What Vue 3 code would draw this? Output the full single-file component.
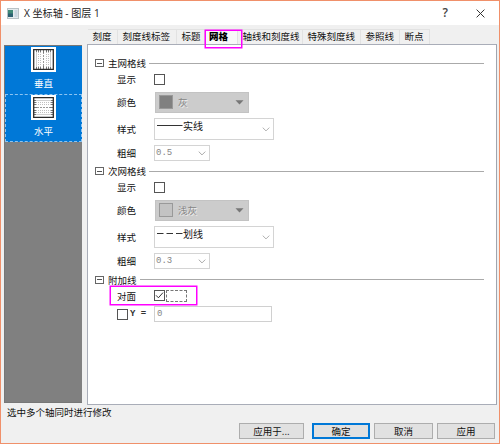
<script setup>
const tabs = [
  { name: '刻度', width: 30 },
  { name: '刻度线标签', width: 59 },
  { name: '标题', width: 28 },
  { name: '网格', width: 33, active: true },
  { name: '轴线和刻度线', width: 65 },
  { name: '特殊刻度线', width: 58 },
  { name: '参照线', width: 39 },
  { name: '断点', width: 30 },
]
const grids = [
  { title: '主网格线', color: '灰', swatch: '#808080', style: '实线', dash: 'none', width: '0.5' },
  { title: '次网格线', color: '浅灰', swatch: '#c3c3c3', style: '划线', dash: '6.5 3', width: '0.3' },
]
const axes = [
  { name: '垂直', rotate: 0 },
  { name: '水平', rotate: 90, focus: true },
]
const buttons = [
  { name: '应用于...', width: 65, gap: 8 },
  { name: '确定', width: 58, gap: 4, primary: true },
  { name: '取消', width: 59, gap: 4 },
  { name: '应用', width: 58, gap: 0 },
]
</script>

<template>
  <div class="window">
    <header class="titlebar">
      <svg class="app-icon" width="12" height="11" viewBox="0 0 12 11">
        <rect x="0.5" y="0.5" width="11" height="10" fill="#e4ebee" stroke="#b9c2c6" />
        <rect x="1" y="2" width="5" height="7" fill="#3f8a78" />
        <rect x="1" y="5.5" width="5" height="3.5" fill="#2c6172" />
        <rect x="7.5" y="2" width="3" height="7" fill="#c9d6e0" />
      </svg>
      <span class="title">X 坐标轴 - 图层 1</span>
      <span class="help">?</span>
      <svg class="close" width="9" height="9" viewBox="0 0 9 9">
        <path d="M0.6 0.6L8.4 8.4M8.4 0.6L0.6 8.4" stroke="#333" fill="none" />
      </svg>
    </header>

    <main class="body">
      <aside class="sidebar">
        <div v-for="a in axes" :key="a.name" class="axis" :class="{ focus: a.focus }">
          <svg width="25" height="25" viewBox="0 0 25 25">
            <rect width="25" height="25" fill="#fff" />
            <g :transform="`rotate(${a.rotate} 12.5 12.5)`" fill="none">
              <path d="M5.5 5V20M19.5 5V20" stroke="#d0d0d0" />
              <path d="M7.5 5V20M9.5 5V20M15.5 5V20M17.5 5V20" stroke="#c0c0c0" stroke-dasharray="1 1" />
              <path d="M12.5 5V20" stroke="#999" stroke-dasharray="2 1" />
              <path d="M5.5 3v2M7.5 3v2M9.5 3v2M12.5 3v3M15.5 3v2M17.5 3v2M19.5 3v2M5.5 22v-2M7.5 22v-2M9.5 22v-2M12.5 22v-3M15.5 22v-2M17.5 22v-2M19.5 22v-2" stroke="#777" />
              <path d="M2.7 2.7H22.3V22.3H2.7Z" stroke="#2a2a2a" stroke-width="1.3" />
            </g>
          </svg>
          <span class="axis-name">{{ a.name }}</span>
        </div>
      </aside>

      <section class="content">
        <nav class="tabs">
          <div v-for="t in tabs" :key="t.name" class="tab" :class="{ active: t.active }" :style="{ width: t.width + 'px' }">
            {{ t.name }}
            <i v-if="t.active" class="mark"></i>
          </div>
        </nav>
        <div class="panel">
          <div v-for="g in grids" :key="g.title" class="group">
            <div class="head"><i class="fold"></i><span>{{ g.title }}</span><i class="rule"></i></div>
            <div class="row show"><span class="label">显示</span><i class="check"></i></div>
            <div class="row color">
              <span class="label">颜色</span>
              <div class="picker">
                <i class="swatch" :style="{ background: g.swatch }"></i>
                <span class="picker-name">{{ g.color }}</span>
                <svg width="9" height="5" viewBox="0 0 9 5"><path d="M0.5 0.3H8.5L4.5 4.6Z" fill="#777" /></svg>
              </div>
            </div>
            <div class="row style">
              <span class="label">样式</span>
              <div class="combo wide">
                <svg class="sample" width="26" height="3" viewBox="0 0 26 3">
                  <path d="M0 1.5H25.5" stroke="#333" :stroke-dasharray="g.dash" />
                </svg>
                <span class="style-name">{{ g.style }}</span>
                <svg class="chev" width="8" height="5" viewBox="0 0 8 5"><path d="M0.7 0.6L4 3.9L7.3 0.6" fill="none" stroke="#b0b0b0" /></svg>
              </div>
            </div>
            <div class="row weight">
              <span class="label">粗细</span>
              <div class="combo small">
                <span class="num">{{ g.width }}</span>
                <svg class="chev" width="8" height="5" viewBox="0 0 8 5"><path d="M0.7 0.6L4 3.9L7.3 0.6" fill="none" stroke="#aaa" /></svg>
              </div>
            </div>
          </div>
          <div class="group">
            <div class="head last"><i class="fold"></i><span>附加线</span><i class="rule"></i></div>
            <div class="row opposite">
              <span class="label">对面</span>
              <i class="check">
                <svg width="9" height="9" viewBox="0 0 9 9"><path d="M1 4.3L3.4 6.8L8 1.6" fill="none" stroke="#333" /></svg>
              </i>
              <i class="focus-box"></i>
            </div>
            <div class="row y-row">
              <span class="label y-label"><i class="check"></i>Y =</span>
              <div class="field num">0</div>
            </div>
          </div>
        </div>
      </section>
    </main>

    <p class="hint">选中多个轴同时进行修改</p>
    <footer class="buttons">
      <button v-for="b in buttons" :key="b.name" :class="{ primary: b.primary }" :style="{ width: b.width + 'px', marginRight: b.gap + 'px' }">{{ b.name }}</button>
    </footer>
  </div>
</template>

<style>
body { margin: 0; overflow: hidden; }
</style>

<style scoped>
* { box-sizing: border-box; }
svg { display: block; flex: none; }
i { display: block; flex: none; font-style: normal; }
.window {
  width: 500px; height: 444px; border: 1px solid #f0906a; background: #f0f0f0;
  font: 9.5px/14px "Noto Sans CJK SC", sans-serif; color: #111;
  display: flex; flex-direction: column; white-space: nowrap;
}
.titlebar { height: 24px; background: #fff; display: flex; align-items: center; padding: 0 14px 0 6px; flex: none; }
.title { font: 10.1px/14px "Open Sans", "Noto Sans CJK SC", sans-serif; margin-left: 5px; color: #222; }
.help { margin-left: auto; font: 600 12px/14px "Open Sans", sans-serif; color: #444; margin-right: 28px; }
.body { display: flex; height: 380px; padding: 0 2px 0 3px; flex: none; }
.sidebar { width: 78px; height: 358px; margin: 20px 5px 0 0; background: #808080; border: 1px solid #777; border-right: 0; flex: none; }
.axis { height: 48px; background: #0078d7; color: #fff; display: flex; flex-direction: column; align-items: center; padding-top: 1px; }
.axis.focus { border: 1px dashed #8cc4f2; padding-top: 0; }
.axis-name { margin-top: 4px; }
.content { width: 410px; flex: none; }
.tabs { display: flex; height: 19px; padding: 4px 0 0 1px; }
.tab { height: 15px; border: 1px solid #e2e2e2; border-left: 0; border-bottom: 0; padding-left: 4.5px; line-height: 12px; flex: none; position: relative; }
.tab.active { font-weight: 900; padding-left: 4px; background: #f8f8f8; z-index: 1; color: #000; }
.mark { position: absolute; left: 0; top: 0; width: 37px; height: 18px; border: 1px solid #ff00ff; box-shadow: 0 0 0 0.5px #ff00ff; }
.mark::after { content: ""; position: absolute; right: 0; top: 1px; width: 3px; height: 12px; background: #f0f0f0; }
.panel { height: 361px; border: 1px solid #a9adb8; border-right-color: #a0a4ae; background: #fff; padding: 11px 12px 0 7px; }
.group { height: 108px; }
.head { height: 14px; display: flex; align-items: center; }
.head span { margin: 0 3px 0 4px; }
.head.last { position: relative; top: 0.5px; }
.fold { width: 9px; height: 8px; border: 1px solid #666; display: flex; align-items: center; }
.fold::after { content: ""; width: 5px; height: 1px; margin: auto; background: #555; }
.rule { flex: 1; height: 1px; background: #aaa; }
.row { display: flex; align-items: center; padding-left: 22px; }
.label { width: 37px; flex: none; }
.show { height: 18px; }
.color { height: 28px; }
.style { height: 26px; }
.weight { height: 22px; }
.check { width: 11px; height: 11px; border: 1px solid #555; background: #fff; }
.picker { width: 94px; height: 21px; margin-left: 1px; background: #ccc; border: 1px solid #c3c3c3; display: flex; align-items: center; padding: 0 4px 0 3px; }
.swatch { width: 14px; height: 14px; border: 1px solid #999; }
.picker-name { flex: 1; margin-left: 5px; color: #868686; text-shadow: 1px 1px #eee; }
.combo { border: 1px solid #d4d4d4; background: #fff; display: flex; align-items: center; }
.chev { margin-left: auto; }
.wide { width: 120px; height: 22px; padding-right: 3px; }
.sample { margin: -7px 0 0 2px; }
.style-name { margin-top: -7px; font-size: 10px; }
.small { width: 56px; height: 16px; padding: 0 3px 0 1px; }
.num { font-family: "Liberation Mono", monospace; font-size: 9px; color: #858585; }
.opposite { width: 87px; height: 19px; margin-left: 15px; padding-left: 6px; border: 1px solid #ff00ff; box-shadow: 0 0 0 0.5px #ff00ff; }
.focus-box { width: 21px; height: 12px; margin-left: 1px; border: 1px dashed #777; }
.y-row { height: 18px; }
.y-label { display: flex; align-items: center; gap: 2px; font-family: "Liberation Mono", monospace; font-size: 9px; font-weight: 700; color: #333; }
.field { width: 118px; height: 16px; border: 1px solid #d0d0d0; padding-left: 2px; line-height: 14px; }
.hint { margin: 0; height: 18px; padding-left: 6px; line-height: 14px; flex: none; }
.buttons { display: flex; justify-content: flex-end; padding-right: 4px; }
button { height: 16px; padding: 0; border: 1px solid #adadad; background: #e1e1e1; font: inherit; line-height: 13px; color: #111; }
button.primary { border: 1.5px solid #0078d7; outline: 0.5px solid #0078d7; outline-offset: -2px; }
</style>
